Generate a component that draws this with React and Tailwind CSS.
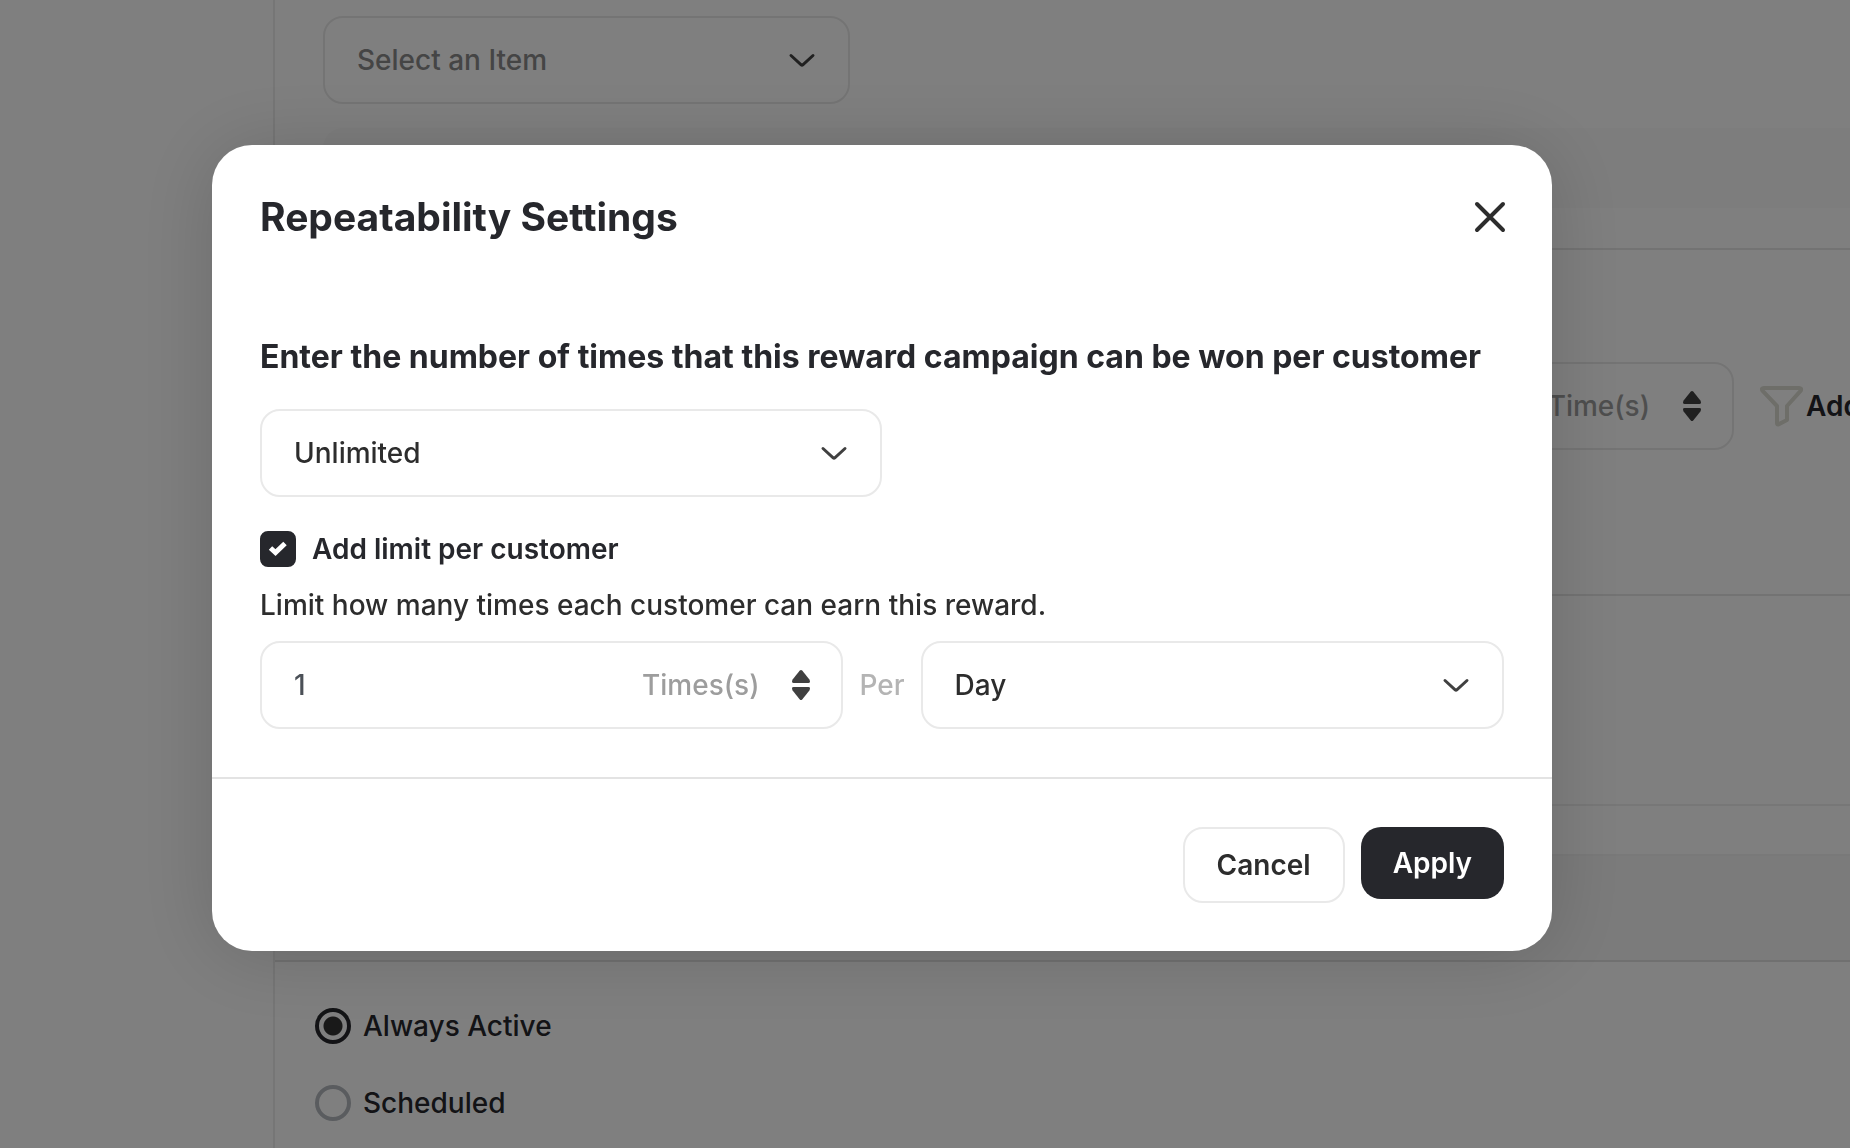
import { useState } from "react";
import { clsx } from "clsx";

function Chevron({ className }) {
  return (
    <svg
      viewBox="0 0 32 32"
      fill="none"
      stroke="#404040"
      strokeWidth="3"
      strokeLinecap="round"
      strokeLinejoin="round"
      className={clsx("pointer-events-none size-8 shrink-0", className)}
    >
      <path d="M5 11.5 L15.2 20.8 Q16 21.5 16.8 20.8 L27 11.5" />
    </svg>
  );
}

function Stepper() {
  return (
    <svg viewBox="0 0 20 32" fill="#404040" className="h-8 w-5 shrink-0">
      <path d="M8.8 1.6 L1.6 10.6 Q0 14 2.6 14 H17.4 Q20 14 18.4 10.6 L11.2 1.6 Q10 0.4 8.8 1.6Z" />
      <path d="M8.8 30.4 L1.6 21.4 Q0 18 2.6 18 H17.4 Q20 18 18.4 21.4 L11.2 30.4 Q10 31.6 8.8 30.4Z" />
    </svg>
  );
}

function Select({ label, options, className, selectClassName }) {
  return (
    <div
      className={clsx(
        "grid items-center rounded-[20px] border-2 border-[#e9e9e9]",
        className,
      )}
    >
      <select
        aria-label={label}
        className={clsx(
          "col-start-1 row-start-1 h-[84px] w-full appearance-none rounded-[20px] bg-transparent px-8 font-medium outline-none",
          selectClassName,
        )}
      >
        {options.map((option) => (
          <option key={option}>{option}</option>
        ))}
      </select>
      <Chevron className="col-start-1 row-start-1 mr-[30px] justify-self-end" />
    </div>
  );
}

function NumberField({ label, unit, value, onChange, className }) {
  return (
    <div
      className={clsx(
        "flex h-[88px] items-center rounded-[20px] border-2 border-[#e9e9e9] pr-[30px] pl-8",
        className,
      )}
    >
      <input
        type="text"
        inputMode="numeric"
        aria-label={label}
        value={value}
        onChange={(e) => onChange(e.target.value)}
        className="min-w-0 flex-1 bg-transparent font-medium text-[#4b5057] outline-none"
      />
      <span className="mr-8 font-medium text-[#9d9d9d]">{unit}</span>
      <Stepper />
    </div>
  );
}

function ScheduleOption({ label, checked, onChange }) {
  return (
    <label className="flex items-center gap-3 font-medium text-[#26272c]">
      <input
        type="radio"
        name="schedule"
        checked={checked}
        onChange={onChange}
        className="size-9 appearance-none rounded-full border-4 border-[#b4b8be] checked:border-[#26272c] checked:bg-[radial-gradient(circle,#333_9px,transparent_10px)]"
      />
      {label}
    </label>
  );
}

function CampaignForm() {
  const [schedule, setSchedule] = useState("Always Active");
  const [times, setTimes] = useState("1");

  return (
    <div className="ml-[273px] overflow-hidden rounded-bl-lg border-b-2 border-l-2 border-[#ececec]">
      <div className="pt-4 pl-12">
        <Select
          label="Item"
          options={["Select an Item"]}
          className="w-[527px]"
          selectClassName="text-[#8a8a8a]"
        />
        <div className="mt-6 h-20 rounded-l-[20px] bg-[#fafafa]" />
      </div>
      <div className="mt-10 flex h-[348px] items-start border-y-2 border-[#e6e6e6] pt-28">
        <NumberField
          label="Reward times"
          unit="Time(s)"
          value={times}
          onChange={setTimes}
          className="ml-[875px] w-[584px] shrink-0"
        />
        <button
          type="button"
          className="ml-6 flex h-[88px] shrink-0 items-center font-semibold whitespace-nowrap text-[#26272c]"
        >
          <svg
            viewBox="0 0 48 48"
            fill="none"
            stroke="#dcdcd2"
            strokeWidth="4"
            strokeLinejoin="round"
            className="size-12"
          >
            <path d="M6 6 H41 Q44 6 42.8 8.6 L29 24 V38 L20.4 42.4 Q19 43 19 41 V24 L4.4 8.6 Q3 6 6 6Z" />
          </svg>
          Add
        </button>
      </div>
      <div className="h-[210px] border-b-2 border-[#efefef]" />
      <div className="mt-12 h-[108px] border-t-2 border-b-2 border-t-[#f2f2f2] border-b-[#e0e0e0] bg-[#f7f7f7]" />
      <div className="flex flex-col gap-[41px] pt-[46px] pb-8 pl-10">
        {["Always Active", "Scheduled"].map((option) => (
          <ScheduleOption
            key={option}
            label={option}
            checked={schedule === option}
            onChange={() => setSchedule(option)}
          />
        ))}
      </div>
    </div>
  );
}

function RepeatabilityModal() {
  const [limited, setLimited] = useState(true);
  const [times, setTimes] = useState("1");

  return (
    <div
      role="dialog"
      aria-modal="true"
      aria-labelledby="modal-title"
      className="w-full max-w-[1340px] rounded-[40px] bg-white text-[#2d2d2d] shadow-[0_4px_80px_rgba(0,0,0,0.16)]"
    >
      <div className="flex items-center justify-between pt-12 pr-[46px] pl-12">
        <h2 id="modal-title" className="text-[39px] leading-[48px] font-bold text-[#26272c]">
          Repeatability Settings
        </h2>
        <button type="button" aria-label="Close">
          <svg
            viewBox="0 0 32 32"
            stroke="#2d2d2d"
            strokeWidth="4"
            strokeLinecap="round"
            className="size-8"
          >
            <path d="M3 3 L29 29 M29 3 L3 29" />
          </svg>
        </button>
      </div>

      <div className="px-12 pt-24 pb-12">
        <h3 className="text-[32px] leading-10 font-bold text-[#26272c]">
          Enter the number of times that this reward campaign can be won per
          customer
        </h3>
        <Select
          label="Number of times"
          options={["Unlimited", "Limited"]}
          className="mt-8 w-[622px]"
        />
        <label className="mt-[34px] flex items-center gap-4 font-semibold text-[#26272c]">
          <span className="grid size-9 place-items-center">
            <input
              type="checkbox"
              checked={limited}
              onChange={(e) => setLimited(e.target.checked)}
              className="peer col-start-1 row-start-1 size-9 appearance-none rounded-lg border-2 border-[#26272c] checked:bg-[#26272c]"
            />
            <svg
              viewBox="0 0 36 36"
              fill="none"
              stroke="white"
              strokeWidth="5"
              className="pointer-events-none invisible col-start-1 row-start-1 size-9 peer-checked:visible"
            >
              <path d="M10.5 17 L15.5 21.5 L25 12.5" />
            </svg>
          </span>
          Add limit per customer
        </label>
        <p className="mt-5 font-medium">
          Limit how many times each customer can earn this reward.
        </p>
        <div className="mt-[18px] grid grid-cols-[minmax(0,1fr)_auto_minmax(0,1fr)] items-center gap-4">
          <NumberField
            label="Limit"
            unit="Times(s)"
            value={times}
            onChange={setTimes}
          />
          <span className="font-medium text-[#b4b4b4]">Per</span>
          <Select label="Period" options={["Day", "Week", "Month"]} />
        </div>
      </div>

      <div className="flex items-start justify-end gap-4 border-t-2 border-[#e3e3e3] p-12 font-semibold">
        <button
          type="button"
          className="h-[76px] rounded-[20px] border-2 border-[#e9e9e9] px-8"
        >
          Cancel
        </button>
        <button
          type="button"
          className="h-[72px] rounded-[20px] bg-[#26272c] px-8 text-white"
        >
          Apply
        </button>
      </div>
    </div>
  );
}

export default function App() {
  return (
    <div className="h-screen overflow-hidden bg-white font-['Inter',sans-serif] text-[28px] leading-9">
      <CampaignForm />
      <div className="fixed inset-0 bg-black/50 pt-[145px] pr-[298px] pl-[212px]">
        <RepeatabilityModal />
      </div>
    </div>
  );
}
